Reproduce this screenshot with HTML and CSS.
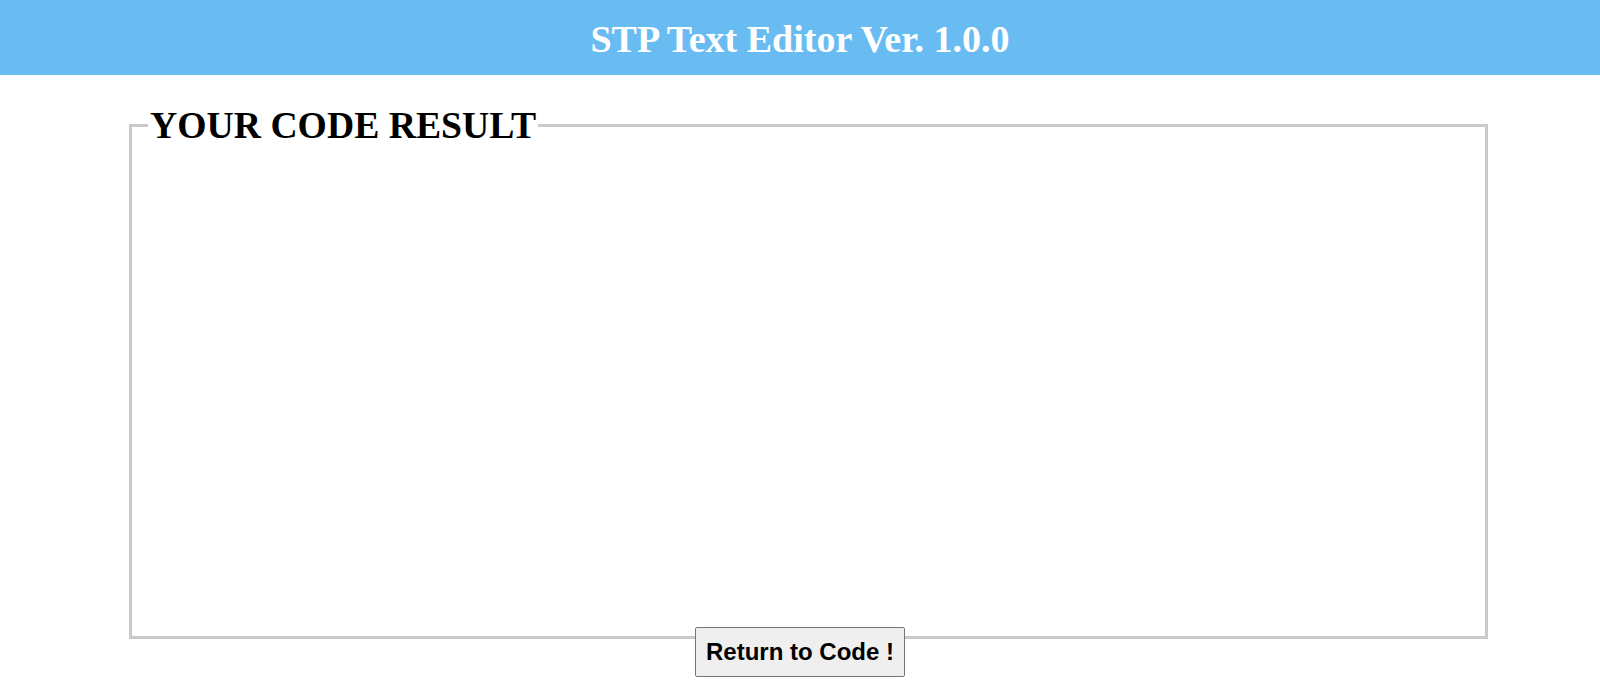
FILE: index.html
```html
<!DOCTYPE html>
<html>
<head>
<meta charset="utf-8">
<title>STP Text Editor</title>
<link rel="stylesheet" href="styles.css">
</head>
<body>
<header class="topbar">STP Text Editor Ver. 1.0.0</header>
<main class="main">
  <fieldset class="result">
    <legend class="result-title">YOUR CODE RESULT</legend>
    <div class="result-body"></div>
  </fieldset>
  <div class="actions">
    <button class="return-btn" type="button">Return to Code !</button>
  </div>
</main>
</body>
</html>
```

FILE: styles.css
```css
html, body {
  margin: 0;
  padding: 0;
  background: #ffffff;
}

body {
  font-family: "Liberation Serif", "Times New Roman", serif;
  color: #000;
}

.topbar {
  height: 75px;
  box-sizing: border-box;
  padding-top: 17px;
  background: #69bcf2;
  color: #ffffff;
  font-family: "Liberation Serif", "Times New Roman", serif;
  font-weight: bold;
  font-size: 38px;
  line-height: normal;
  text-align: center;
}

.main {
  padding: 0;
}

.result {
  margin: 28px 112px 0 129px;
  padding: 0 16px;
  border: 3px solid #cacaca;
  font-size: 16px;
}

.result-title {
  padding: 0 2px;
  font-family: "Liberation Serif", "Times New Roman", serif;
  font-weight: bold;
  font-size: 37.7px;
  line-height: normal;
  color: #000;
}

.result-body {
  height: 489px;
}

.actions {
  display: flex;
  justify-content: center;
  margin-top: -12px;
}

.return-btn {
  padding: 10px 10px;
  font-family: "Liberation Sans", Arial, sans-serif;
  font-weight: bold;
  font-size: 24px;
  line-height: normal;
  color: #000;
  background: #efefef;
  border: 1px solid #767676;
  border-radius: 2px;
}
```
